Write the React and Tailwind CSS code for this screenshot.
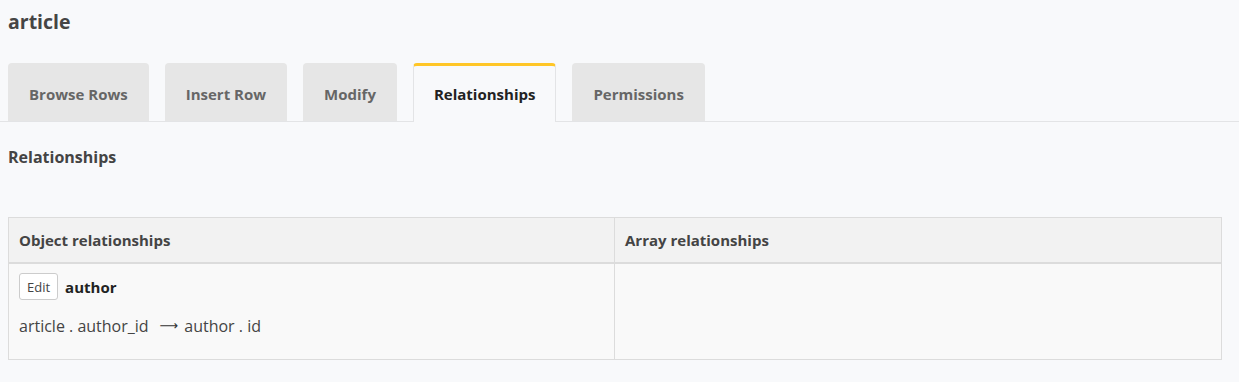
const TABS = ['Browse Rows', 'Insert Row', 'Modify', 'Relationships', 'Permissions'];

export default function App() {
  return (
    <div className="min-h-[382px] bg-[#f8f9fb] text-[#333] font-['Open_Sans','Noto_Sans',sans-serif]">
      <div className="px-2 pt-[9px]">
        <h1 className="text-[19.5px] font-bold leading-[26px] text-[#454545]">article</h1>
      </div>

      <div className="mt-[28px] flex gap-4 border-b border-[#e3e4e6] px-2">
        {TABS.map((t) => {
          const active = t === 'Relationships';
          return active ? (
            <div
              key={t}
              className="-mb-px flex h-[59px] items-center rounded-t-[4px] border-x border-t-[3px] border-x-[#e3e4e6] border-t-[#ffc627] bg-[#f8f9fb] px-[20px] pb-px text-[15px] font-bold leading-[20px] text-[#222]"
            >
              {t}
            </div>
          ) : (
            <div
              key={t}
              className="flex h-[58px] items-center rounded-t-[4px] bg-[#e6e6e6] px-[21px] pt-[3px] text-[15px] font-bold leading-[20px] text-[#666]"
            >
              {t}
            </div>
          );
        })}
      </div>

      <div className="pl-2 pr-[17px]">
        <h2 className="mt-[24px] text-[16px] font-bold leading-[22px] text-[#444]">Relationships</h2>

        <div className="mt-[49px] border border-[#dcdcdc]">
          <div className="grid grid-cols-2 border-b-2 border-[#dcdcdc] bg-[#f2f2f2]">
            <div className="flex h-[44px] items-center border-r border-[#dcdcdc] px-[10px] text-[15px] font-bold leading-[20px] text-[#444]">
              Object relationships
            </div>
            <div className="flex h-[44px] items-center px-[10px] text-[15px] font-bold leading-[20px] text-[#444]">
              Array relationships
            </div>
          </div>
          <div className="grid grid-cols-2 bg-[#f9f9f9]">
            <div className="h-[95px] border-r border-[#dcdcdc] px-[10px] pt-[9px]">
              <div className="flex items-center gap-[7px]">
                <button className="h-[27px] rounded-[3px] border border-[#ccc] bg-white px-[7px] text-[13px] leading-[18px] text-[#444]">
                  Edit
                </button>
                <span className="text-[15px] font-bold leading-[20px] text-[#222]">author</span>
              </div>
              <div className="mt-[15px] flex items-center text-[16px] leading-[22px] text-[#444]">
                <span>article . author_id</span>
                <span className="ml-[11px] mr-[6px] font-['DejaVu_Sans'] text-[13px] leading-[22px] text-[#333]">⟶</span>
                <span>author . id</span>
              </div>
            </div>
            <div className="h-[95px]" />
          </div>
        </div>
      </div>
    </div>
  );
}
